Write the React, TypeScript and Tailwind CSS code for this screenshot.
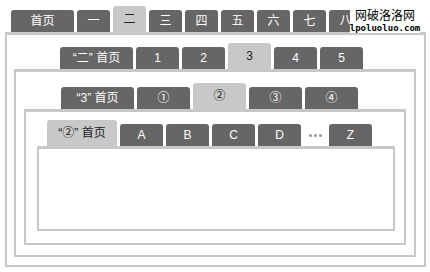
import clsx from "clsx";

type TabProps = { label: string; w: string; active?: boolean };

function Tab({ label, w, active }: TabProps) {
  return (
    <div
      className={clsx(
        "flex shrink-0 items-center justify-center rounded-t-[3px] text-[12px] leading-none",
        w,
        active ? "h-[26px] bg-[#c8c8c8] text-[#222]" : "h-[22px] bg-[#666666] text-white"
      )}
    >
      {label}
    </div>
  );
}

const font = { fontFamily: '"Liberation Sans", "Noto Sans CJK SC", sans-serif' };

export default function App() {
  const top = ["一", "二", "三", "四", "五", "六", "七", "八"];

  return (
    <div className="relative h-[272px] w-[430px] overflow-hidden bg-white pt-[6px]" style={font}>
      {/* level 1 */}
      <div className="ml-[11px] flex h-[26px] items-end gap-[3px]">
        <Tab label="首页" w="w-[63px]" />
        {top.map((t) => (
          <Tab key={t} label={t} w="w-[33px]" active={t === "二"} />
        ))}
      </div>

      <div className="ml-[5px] w-[421px] border-2 border-t-[3px] border-[#c8c8c8] pb-[8px] pl-[7px] pr-[8px] pt-[8px]">
        {/* level 2 */}
        <div className="ml-[46px] flex h-[26px] items-end gap-[3px]">
          <Tab label="“二” 首页" w="w-[73px]" />
          {["1", "2", "3", "4", "5"].map((t) => (
            <Tab key={t} label={t} w="w-[43px]" active={t === "3"} />
          ))}
        </div>

        <div className="border-2 border-t-[3px] border-[#c8c8c8] pb-[10px] pl-[8px] pr-[8px] pt-[11px]">
          {/* level 3 */}
          <div className="ml-[37px] flex h-[26px] items-end gap-[3px]">
            <Tab label="“3” 首页" w="w-[73px]" />
            {["①", "②", "③", "④"].map((t) => (
              <Tab key={t} label={t} w="w-[53px]" active={t === "②"} />
            ))}
          </div>

          <div className="border-2 border-t-[3px] border-[#c8c8c8] pb-[12px] pl-[11px] pr-[9px] pt-[8px]">
            {/* level 4 */}
            <div className="ml-[10px] flex h-[26px] items-end gap-[3px]">
              <Tab label="“②” 首页" w="w-[70px]" active />
              {["A", "B", "C", "D"].map((t) => (
                <Tab key={t} label={t} w="w-[43px]" />
              ))}
              <div className="flex h-[22px] w-[22px] items-center justify-center gap-[2px]">
                <span className="h-[3px] w-[3px] rounded-full bg-[#999]" />
                <span className="h-[3px] w-[3px] rounded-full bg-[#999]" />
                <span className="h-[3px] w-[3px] rounded-full bg-[#999]" />
              </div>
              <Tab label="Z" w="w-[43px]" />
            </div>

            <div className="h-[85px] border-2 border-t-[3px] border-[#c8c8c8] bg-white" />
          </div>
        </div>
      </div>

      {/* watermark */}
      <div className="absolute left-[350px] top-[8px] flex w-[70px] flex-col items-center bg-white">
        <span className="block h-[14px] text-[12px] leading-[14px] text-black" style={{ fontFamily: '"Noto Sans CJK SC", sans-serif' }}>
          网破洛洛网
        </span>
        <span className="mt-[2px] block h-[9px] text-[9px] font-bold leading-[9px] text-black" style={{ fontFamily: '"DejaVu Sans Mono", monospace' }}>
          lpoluoluo.com
        </span>
      </div>
    </div>
  );
}
